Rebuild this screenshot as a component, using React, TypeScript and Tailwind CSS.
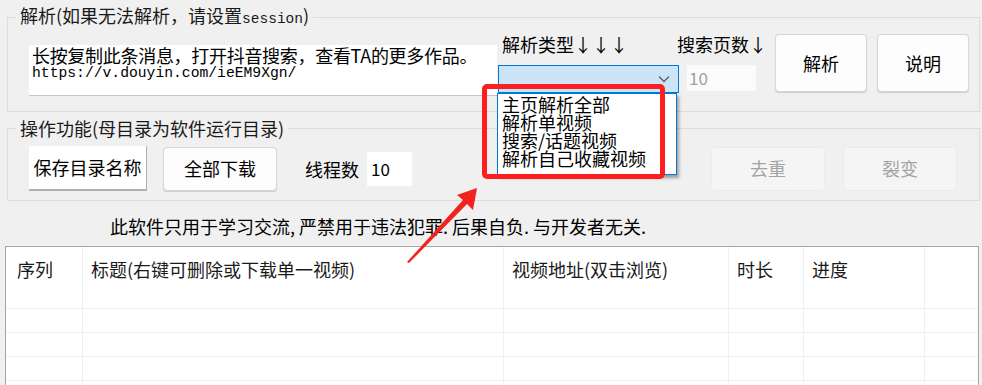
import React from "react";

const rows = [0, 1, 2, 3];

function Chevron() {
  return (
    <svg width="12" height="8" viewBox="0 0 12 8" className="block">
      <polyline points="1,1.5 6,6.5 11,1.5" fill="none" stroke="#606060" strokeWidth="1.3" />
    </svg>
  );
}

export default function App() {
  return (
    <div className="relative w-[982px] h-[385px] overflow-hidden bg-[#f0f0f0] text-[18px] text-black font-['Noto_Sans_CJK_SC','Noto_Sans',sans-serif] pt-[5px]">
      {/* Group 1 */}
      <fieldset className="ml-[7px] mr-[2px] border border-[#dcdcdc] pb-[15px]">
        <legend className="ml-[8px] px-[4px] leading-[20px] text-[#1a1a1a]">
          解析(如果无法解析，请设置<span className="font-['Liberation_Mono',monospace] text-[14.5px]">session</span>)
        </legend>
        <div className="flex items-start">
          <div className="ml-[21px] mt-[16px] w-[468px] h-[51px] bg-white border-b border-[#c4c4c4] pl-[3px] pt-[1px]">
            <div className="leading-[18px] text-[18px] tracking-[-0.3px] whitespace-nowrap">长按复制此条消息，打开抖音搜索，查看TA的更多作品。</div>
            <div className="leading-[18px] text-[14.7px] font-['Liberation_Mono',monospace] whitespace-nowrap">https://v.douyin.com/ieEM9Xgn/</div>
          </div>
          <div className="relative ml-[1px] mt-[5px] flex flex-col">
            <div className="pl-[4px] leading-[20px] whitespace-nowrap">解析类型<span className="tracking-[-2px]">↓ ↓ ↓</span></div>
            <div className="mt-[11px] w-[181px] h-[28px] bg-[#cce4f7] border border-[#0078d7] flex items-center justify-end pr-[8px]">
              <Chevron />
            </div>
            {/* dropdown list */}
            <div className="absolute left-[-1px] top-[59px] w-[180px] h-[82px] bg-white border border-[#0078d7] shadow-[2px_3px_3px_rgba(0,0,0,0.35)] pl-[4px] pt-[1px] z-10">
              <div className="h-[18px] leading-[18px] whitespace-nowrap">主页解析全部</div>
              <div className="h-[18px] leading-[18px] whitespace-nowrap">解析单视频</div>
              <div className="h-[18px] leading-[18px] whitespace-nowrap">搜索/话题视频</div>
              <div className="h-[18px] leading-[18px] whitespace-nowrap">解析自己收藏视频</div>
            </div>
          </div>
          <div className="ml-[-2px] mt-[5px] w-[92px] flex flex-col">
            <div className="leading-[20px] whitespace-nowrap">搜索页数<span className="tracking-[-2px]">↓</span></div>
            <div className="ml-[10px] mt-[11px] w-[69px] h-[26px] bg-[#fbfbfb] text-[#a0a0a0] pl-[2px] leading-[26px] text-[17px]">10</div>
          </div>
          <button className="ml-[6px] mt-[5px] w-[92px] h-[58px] bg-[#fdfdfd] border border-[#d6d6d6] rounded-[4px] shadow-[0_1px_1px_rgba(0,0,0,0.15)] text-[18px]">解析</button>
          <button className="ml-[10px] mt-[5px] w-[92px] h-[58px] bg-[#fdfdfd] border border-[#d6d6d6] rounded-[4px] shadow-[0_1px_1px_rgba(0,0,0,0.15)] text-[18px]">说明</button>
        </div>
      </fieldset>

      {/* Group 2 */}
      <fieldset className="mt-[6px] ml-[7px] mr-[2px] border border-[#dcdcdc] pb-[8px]">
        <legend className="ml-[8px] px-[4px] leading-[20px] text-[#1a1a1a]">操作功能(母目录为软件运行目录)</legend>
        <div className="mt-[7px] h-[47px] flex items-center pr-[22px]">
          <button className="ml-[21px] w-[118px] h-[45px] bg-white border-b-2 border-r border-[#b0b0b0] text-[18px]">保存目录名称</button>
          <button className="ml-[16px] w-[114px] h-[44px] bg-[#fdfdfd] border border-[#d6d6d6] rounded-[4px] shadow-[0_1px_1px_rgba(0,0,0,0.15)] text-[18px]">全部下载</button>
          <span className="ml-[28px] leading-[24px]">线程数</span>
          <div className="ml-[8px] w-[45px] h-[34px] bg-white pl-[4px] leading-[34px] text-[17px]">10</div>
          <button className="ml-auto w-[114px] h-[44px] bg-[#f5f5f5] border border-[#ebebeb] rounded-[4px] text-[#a3a3a3] text-[18px]">去重</button>
          <button className="ml-[18px] w-[114px] h-[44px] bg-[#f5f5f5] border border-[#ebebeb] rounded-[4px] text-[#a3a3a3] text-[18px]">裂变</button>
        </div>
      </fieldset>

      {/* Disclaimer */}
      <div className="mt-[13px] pl-[110px] leading-[24px] whitespace-nowrap">此软件只用于学习交流, 严禁用于违法犯罪. 后果自负. 与开发者无关.</div>

      {/* Table */}
      <div className="mt-[8px] ml-[5px] w-[974px] border border-[#a8a8a8] bg-white">
        <div className="grid grid-cols-[77px_421px_225px_75px_121px_1fr]">
          {["序列", "标题(右键可删除或下载单一视频)", "视频地址(双击浏览)", "时长", "进度", ""].map((h, i) => (
            <div
              key={i}
              className={`h-[62px] border-b border-[#efefef] ${i < 5 ? "border-r" : ""} ${i === 0 ? "pl-[11px]" : "pl-[8px]"} pt-[10px] leading-[24px] whitespace-nowrap text-[#1a1a1a]`}
            >
              {h}
            </div>
          ))}
          {rows.map((r) =>
            [0, 1, 2, 3, 4, 5].map((c) => (
              <div key={`${r}-${c}`} className={`h-[24px] border-b border-[#efefef] ${c < 5 ? "border-r" : ""}`} />
            ))
          )}
        </div>
      </div>

      {/* Red highlight box */}
      <div className="absolute left-[482px] top-[84px] w-[183px] h-[95px] border-[5px] border-[#ff1e1e] rounded-[5px] z-20" />

      {/* Red arrow */}
      <svg className="absolute left-[400px] top-[180px] z-20" width="85" height="90" viewBox="0 0 85 90">
        <polygon points="77,8 57,15 63,20 7,82 9,83 67,24 73,30" fill="#f2231c" />
      </svg>
    </div>
  );
}
